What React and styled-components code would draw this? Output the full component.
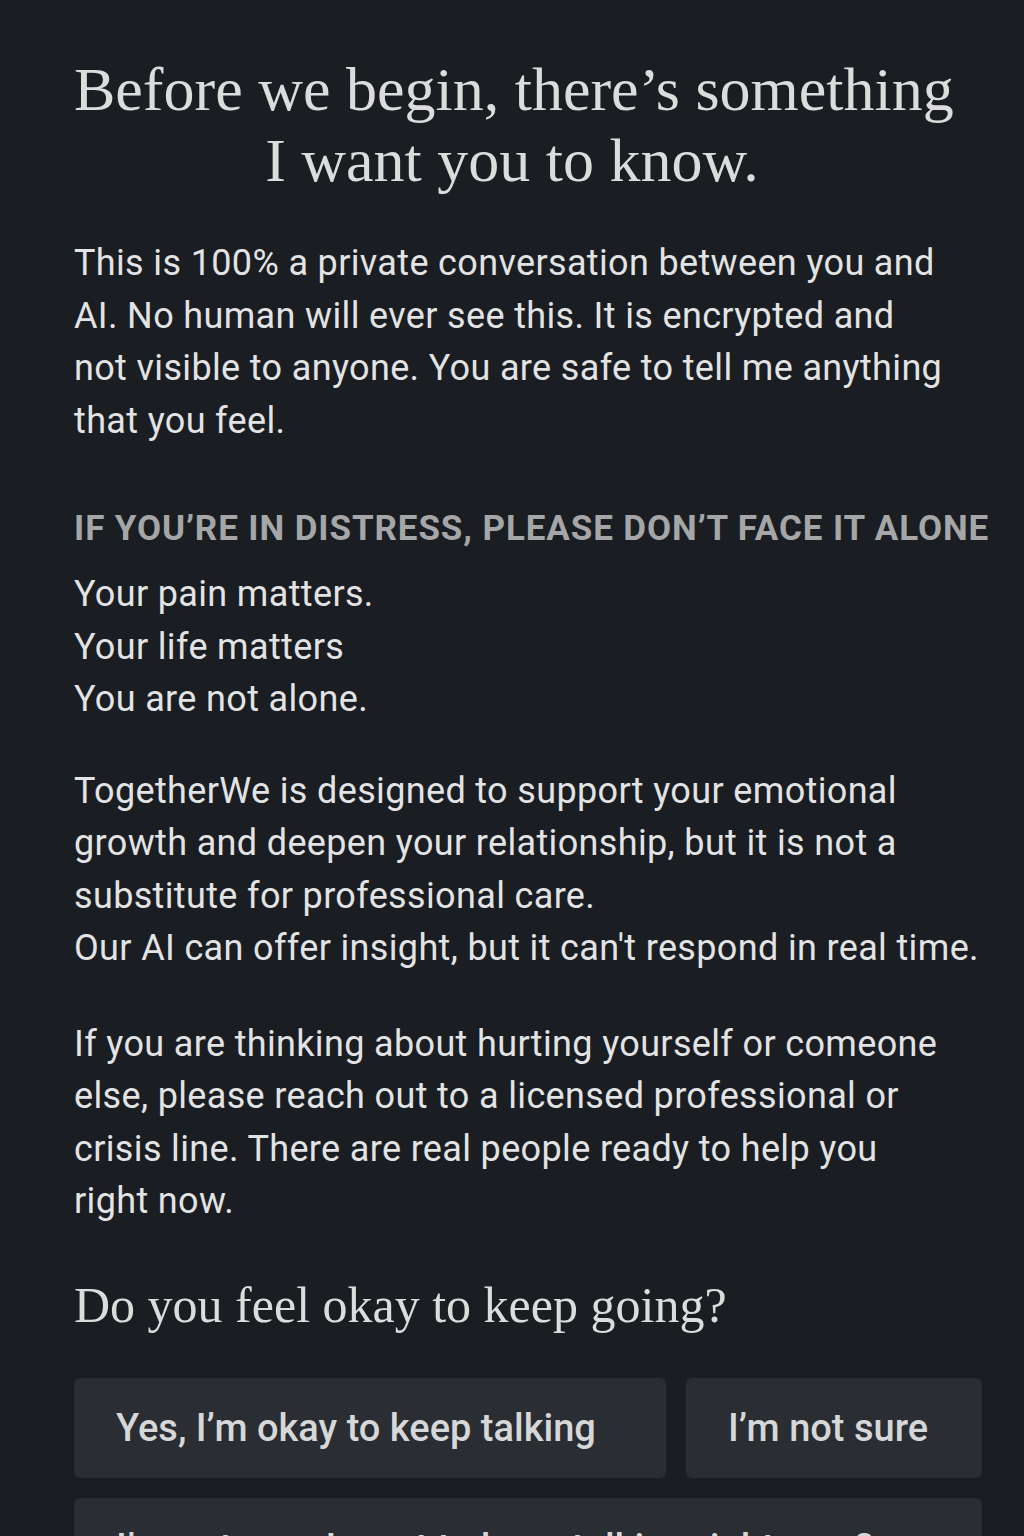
import React from "react";
import styled, { createGlobalStyle } from "styled-components";

const Global = createGlobalStyle`
  html, body { margin: 0; padding: 0; background: #1a1d21; }
  body { font-family: Roboto, "Liberation Sans", sans-serif; -webkit-font-smoothing: antialiased; }
`;

const Page = styled.main`
  min-height: 1536px;
  box-sizing: border-box;
  padding: 54px 0 0 74px;
  background: #1a1d21;
  color: #e2e3e4;
  overflow: hidden;
`;

const Title = styled.h1`
  margin: 0 74px 0 0;
  font-family: "Liberation Serif", "DejaVu Serif", serif;
  font-weight: 400;
  font-size: 62px;
  line-height: 71px;
  text-align: center;
  color: #dcdcdc;
  white-space: nowrap;
`;

const Para = styled.p`
  margin: ${(p) => p.$top || 0}px 0 0;
  font-size: 36px;
  line-height: 52.5px;
  letter-spacing: 0.35px;
  font-weight: 400;
  color: #e2e3e4;
  white-space: nowrap;
`;

const SectionLabel = styled.h2`
  margin: 62px 0 0;
  font-size: 35px;
  line-height: 40px;
  font-weight: 700;
  letter-spacing: 0.9px;
  color: #a4a6a8;
  text-transform: uppercase;
  white-space: nowrap;
`;

const Question = styled.h2`
  margin: 49px 0 0;
  font-family: "Liberation Serif", "DejaVu Serif", serif;
  font-weight: 400;
  font-size: 50px;
  line-height: 56px;
  color: #dcdcdc;
`;

const Choices = styled.div`
  margin-top: 45px;
  width: 908px;
  display: grid;
  grid-template-columns: 2fr 1fr;
  gap: 20px;
`;

const Choice = styled.button`
  grid-column: ${(p) => (p.$wide ? "1 / -1" : "auto")};
  height: 100px;
  border: none;
  border-radius: 6px;
  background: #2a2d31;
  color: #d6d7d8;
  font-family: Roboto, "Liberation Sans", sans-serif;
  font-size: 38px;
  font-weight: 500;
  letter-spacing: 0;
  text-align: left;
  padding: 0 0 0 42px;
  cursor: pointer;
  white-space: nowrap;
`;

export default function App() {
  return (
    <>
      <Global />
      <Page>
        <Title>
          Before we begin, there’s something
          <br />
          I want you to know.
        </Title>
        <Para $top={41}>
          This is 100% a private conversation between you and
          <br />
          AI. No human will ever see this. It is encrypted and
          <br />
          not visible to anyone. You are safe to tell me anything
          <br />
          that you feel.
        </Para>
        <SectionLabel>If you’re in distress, please don’t face it alone</SectionLabel>
        <Para $top={19}>
          Your pain matters.
          <br />
          Your life matters
          <br />
          You are not alone.
        </Para>
        <Para $top={39}>
          TogetherWe is designed to support your emotional
          <br />
          growth and deepen your relationship, but it is not a
          <br />
          substitute for professional care.
          <br />
          Our AI can offer insight, but it can't respond in real time.
        </Para>
        <Para $top={43}>
          If you are thinking about hurting yourself or comeone
          <br />
          else, please reach out to a licensed professional or
          <br />
          crisis line. There are real people ready to help you
          <br />
          right now.
        </Para>
        <Question>Do you feel okay to keep going?</Question>
        <Choices>
          <Choice>Yes, I’m okay to keep talking</Choice>
          <Choice>I’m not sure</Choice>
          <Choice $wide>I’m not sure I want to keep talking right now?</Choice>
        </Choices>
      </Page>
    </>
  );
}
